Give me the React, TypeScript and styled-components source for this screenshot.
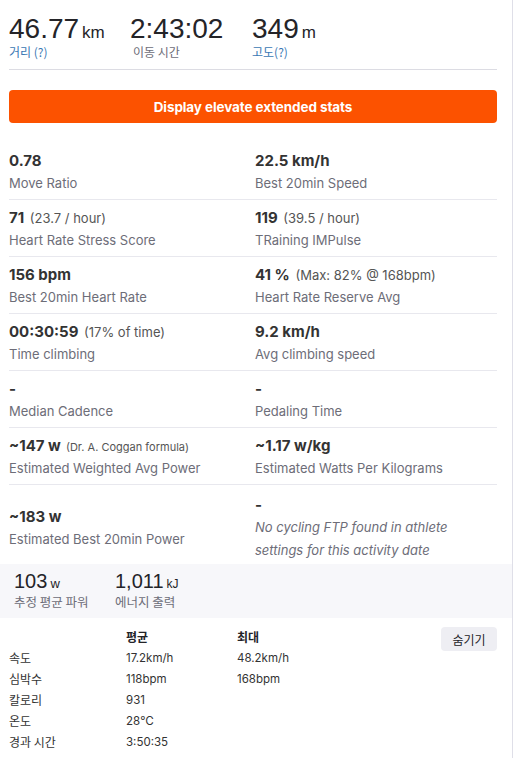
import React from "react";
import styled, { createGlobalStyle } from "styled-components";

const GlobalStyle = createGlobalStyle`
	body {
		margin: 0;
		background: #fff;
		font-family: Inter, "Noto Sans CJK KR", sans-serif;
	}
`;

const Panel = styled.div`
	width: 512px;
	min-height: 758px;
	border-right: 1px solid #dfdfe8;
	box-sizing: content-box;
`;

const Inner = styled.div`
	padding: 14px 15px 0 9px;
`;

const TopStats = styled.div`
	display: grid;
	grid-template-columns: 121px 122px auto;
	height: 55px;
	border-bottom: 1px solid #dcdce3;
`;

const TopStat = styled.div`
	display: flex;
	flex-direction: column;
`;

const BigValue = styled.div`
	font-family: "Liberation Sans", Arial, sans-serif;
	font-size: 28px;
	line-height: 30px;
	height: 30px;
	color: #242428;
`;

const Unit = styled.span<{ $size?: number }>`
	font-size: ${(p) => p.$size ?? 17}px;
	line-height: 1;
	margin-left: 3px;
`;

const TopLabel = styled.div<{ $link?: boolean; $indent?: boolean }>`
	font-family: "Noto Sans CJK KR", sans-serif;
	font-size: 12px;
	line-height: 16px;
	height: 16px;
	padding-left: ${(p) => (p.$indent ? 3 : 0)}px;
	color: ${(p) => (p.$link ? "#3a78b4" : "#6d6d78")};
`;

const ElevateButton = styled.button`
	display: block;
	width: 100%;
	height: 33px;
	margin-top: 20px;
	border: none;
	border-radius: 4px;
	background: #fc5200;
	color: #fff;
	font-family: Inter, sans-serif;
	font-weight: 700;
	font-size: 13.5px;
	letter-spacing: -0.1px;
	cursor: pointer;
`;

const Grid = styled.div`
	margin-top: 20px;
`;

const GridRow = styled.div<{ $last?: boolean }>`
	display: grid;
	grid-template-columns: 246px 1fr;
	align-items: center;
	height: ${(p) => (p.$last ? 79 : 57)}px;
	box-sizing: border-box;
	padding: ${(p) => (p.$last ? "8px 0 2px" : "6px 0 4px")};
	border-bottom: ${(p) => (p.$last ? "none" : "1px solid #e8e8ee")};
`;

const Cell = styled.div`
	display: flex;
	flex-direction: column;
`;

const Value = styled.div`
	font-size: 15px;
	font-weight: 700;
	line-height: 23px;
	height: 23px;
	color: #333;
`;

const Extra = styled.span<{ $small?: boolean }>`
	font-size: ${(p) => (p.$small ? 11 : 13)}px;
	font-weight: 400;
	line-height: 1;
	color: #555;
	margin-left: 2px;
`;

const Label = styled.div<{ $italic?: boolean }>`
	font-size: 13px;
	line-height: 23px;
	height: 23px;
	color: #6d6d78;
	font-style: ${(p) => (p.$italic ? "italic" : "normal")};
`;

const Band = styled.div`
	display: grid;
	grid-template-columns: 101px auto;
	height: 54px;
	padding: 5px 14px 0;
	box-sizing: border-box;
	background: #f7f7fa;
`;

const BandStat = styled.div`
	display: flex;
	flex-direction: column;
`;

const BandValue = styled.div`
	font-family: "Liberation Sans", Arial, sans-serif;
	font-size: 20px;
	line-height: 24px;
	height: 24px;
	color: #242428;
`;

const BandLabel = styled.div`
	font-family: "Noto Sans CJK KR", sans-serif;
	font-size: 12.5px;
	line-height: 18px;
	color: #6d6d78;
`;

const Details = styled.div`
	display: flex;
	justify-content: space-between;
	padding: 8px 15px 0 9px;
`;

const Table = styled.div`
	display: grid;
	grid-template-columns: 117px 111px 100px;
	grid-auto-rows: 21px;
	align-items: center;
	font-size: 11.5px;
	color: #333;
`;

const Head = styled.div`
	font-family: "Noto Sans CJK KR", sans-serif;
	font-size: 12px;
	font-weight: 700;
	color: #242428;
`;

const RowName = styled.div`
	font-family: "Noto Sans CJK KR", sans-serif;
	font-size: 12px;
	color: #333;
`;

const HideButton = styled.button`
	align-self: flex-start;
	margin-top: 1px;
	width: 56px;
	height: 24px;
	border: none;
	border-radius: 4px;
	background: #eeeef3;
	font-family: "Noto Sans CJK KR", sans-serif;
	font-size: 12px;
	color: #242428;
`;

type Stat = { value: string; extra?: string; small?: boolean; label: string; note?: string[] };

const rows: [Stat, Stat][] = [
	[
		{ value: "0.78", label: "Move Ratio" },
		{ value: "22.5 km/h", label: "Best 20min Speed" },
	],
	[
		{ value: "71", extra: "(23.7 / hour)", label: "Heart Rate Stress Score" },
		{ value: "119", extra: "(39.5 / hour)", label: "TRaining IMPulse" },
	],
	[
		{ value: "156 bpm", label: "Best 20min Heart Rate" },
		{ value: "41 %", extra: "(Max: 82% @ 168bpm)", label: "Heart Rate Reserve Avg" },
	],
	[
		{ value: "00:30:59", extra: "(17% of time)", label: "Time climbing" },
		{ value: "9.2 km/h", label: "Avg climbing speed" },
	],
	[
		{ value: "-", label: "Median Cadence" },
		{ value: "-", label: "Pedaling Time" },
	],
	[
		{ value: "~147 w", extra: "(Dr. A. Coggan formula)", small: true, label: "Estimated Weighted Avg Power" },
		{ value: "~1.17 w/kg", label: "Estimated Watts Per Kilograms" },
	],
	[
		{ value: "~183 w", label: "Estimated Best 20min Power" },
		{ value: "-", label: "", note: ["No cycling FTP found in athlete", "settings for this activity date"] },
	],
];

const details = [
	["속도", "17.2km/h", "48.2km/h"],
	["심박수", "118bpm", "168bpm"],
	["칼로리", "931", ""],
	["온도", "28℃", ""],
	["경과 시간", "3:50:35", ""],
];

function StatCell({ s }: { s: Stat }) {
	return (
		<Cell>
			<Value>
				{s.value}
				{s.extra && <Extra $small={s.small}> {s.extra}</Extra>}
			</Value>
			{s.note ? (
				s.note.map((n) => (
					<Label key={n} $italic>
						{n}
					</Label>
				))
			) : (
				<Label>{s.label}</Label>
			)}
		</Cell>
	);
}

export default function App() {
	return (
		<>
			<GlobalStyle />
			<Panel>
				<Inner>
					<TopStats>
						<TopStat>
							<BigValue>
								46.77<Unit>km</Unit>
							</BigValue>
							<TopLabel $link>거리 (?)</TopLabel>
						</TopStat>
						<TopStat>
							<BigValue>2:43:02</BigValue>
							<TopLabel $indent>이동 시간</TopLabel>
						</TopStat>
						<TopStat>
							<BigValue>
								349<Unit>m</Unit>
							</BigValue>
							<TopLabel $link>고도(?)</TopLabel>
						</TopStat>
					</TopStats>
					<ElevateButton>Display elevate extended stats</ElevateButton>
					<Grid>
						{rows.map((r, i) => (
							<GridRow key={i} $last={i === rows.length - 1}>
								<StatCell s={r[0]} />
								<StatCell s={r[1]} />
							</GridRow>
						))}
					</Grid>
				</Inner>
				<Band>
					<BandStat>
						<BandValue>
							103<Unit $size={13}>w</Unit>
						</BandValue>
						<BandLabel>추정 평균 파워</BandLabel>
					</BandStat>
					<BandStat>
						<BandValue>
							1,011<Unit $size={12}>kJ</Unit>
						</BandValue>
						<BandLabel>에너지 출력</BandLabel>
					</BandStat>
				</Band>
				<Details>
					<Table>
						<div />
						<Head>평균</Head>
						<Head>최대</Head>
						{details.map((d) => (
							<React.Fragment key={d[0]}>
								<RowName>{d[0]}</RowName>
								<div>{d[1]}</div>
								<div>{d[2]}</div>
							</React.Fragment>
						))}
					</Table>
					<HideButton>숨기기</HideButton>
				</Details>
			</Panel>
		</>
	);
}
